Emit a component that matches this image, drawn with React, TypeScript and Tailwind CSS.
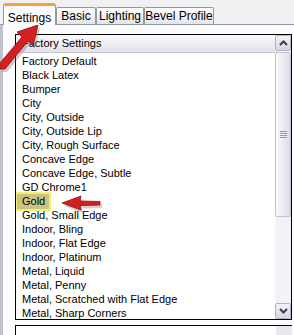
import React from 'react';

const presets = [
  'Factory Default',
  'Black Latex',
  'Bumper',
  'City',
  'City, Outside',
  'City, Outside Lip',
  'City, Rough Surface',
  'Concave Edge',
  'Concave Edge, Subtle',
  'GD Chrome1',
  'Gold',
  'Gold, Small Edge',
  'Indoor, Bling',
  'Indoor, Flat Edge',
  'Indoor, Platinum',
  'Metal, Liquid',
  'Metal, Penny',
  'Metal, Scratched with Flat Edge',
  'Metal, Sharp Corners'
];

const tabs = [
  { label: 'Basic', w: 'w-[40px]' },
  { label: 'Lighting', w: 'w-[48px]' },
  { label: 'Bevel Profile', w: 'w-[70px]' }
];

function Chevron({ up }: { up?: boolean }) {
  return (
    <svg width="9" height="6" viewBox="0 0 9 6">
      <path d={up ? 'M1 5 L4.5 1.5 L8 5' : 'M1 1 L4.5 4.5 L8 1'} fill="none" stroke="#3c3c58" strokeWidth="2" />
    </svg>
  );
}

// red annotation arrows drawn over the dialog
const arrowUp = 'M0 63 L22 37 L17 32 L38 25 L33 46 L28 41 L5 69 L0 69 Z';
const arrowLeft = 'M62 203 L81 196 L80 201 L100 201.5 L100 205 L80 205.5 L81 210 Z';

function Arrows() {
  return (
    <svg className="pointer-events-none absolute left-0 top-0" width="294" height="335">
      <g fill="#777" opacity="0.35" transform="translate(2 3)">
        <path d={arrowUp} />
        <path d={arrowLeft} />
      </g>
      <path d={arrowUp} fill="#d42020" stroke="#8a1010" strokeWidth="0.8" />
      <path d={arrowLeft} fill="#d42020" stroke="#8a1010" strokeWidth="0.8" />
    </svg>
  );
}

export default function App() {
  return (
    <div className="relative h-[335px] w-[294px] overflow-hidden bg-[#f1f1f3] font-['Liberation_Sans',Arial,sans-serif] text-[11px] text-black">
      <div className="flex h-[25px] items-end border-b border-[#919b9c] pl-[3px]">
        <div className="relative z-10 -mb-px flex h-[22px] w-[53px] items-start justify-center rounded-t-[3px] border-x border-t-[3px] border-[#919b9c] border-t-[#f0a43c] bg-[#fcfcfe] pt-[3px] text-[12px]">
          Settings
        </div>
        {tabs.map((t) => (
          <div
            key={t.label}
            className={`flex h-[17px] ${t.w} items-center justify-center rounded-t-[2px] border-x border-t border-[#919b9c] bg-gradient-to-b from-[#ffffff] to-[#e4e4ec] text-[12px]`}
          >
            {t.label}
          </div>
        ))}
      </div>

      <div className="flex h-[310px] flex-col border-l-[3px] border-[#c2c2cc] bg-[#fcfcfe] pl-[12px] pr-[2px] pt-[9px]">
        <div className="flex h-[286px] border border-black bg-white">
          <div className="flex-1 overflow-hidden">
            <div className="flex h-[18px] items-center border-b border-[#c4c4cc] bg-gradient-to-b from-[#fafafc] to-[#e2e2ea] pl-[6px]">
              Factory Settings
            </div>
            <div className="pt-[1px]">
              {presets.map((p) => (
                <div key={p} className="relative flex h-[14px] items-center pl-[6px]">
                  {p === 'Gold' && (
                    <span className="absolute left-[-1px] top-[-2px] h-[19px] w-[36px] border-2 border-[#f3ee74] bg-[#c9c483]" />
                  )}
                  <span className="relative">{p}</span>
                </div>
              ))}
            </div>
          </div>
          <div className="flex w-[16px] flex-col bg-[#f3f3f7]">
            <div className="flex h-[16px] items-center justify-center rounded-[2px] border border-[#b4b4c4] bg-gradient-to-b from-[#f4f4f8] to-[#d6d6e2]">
              <Chevron up />
            </div>
            <div className="mt-[1px] flex h-[165px] items-center justify-center rounded-[2px] border border-[#c2c2d0] bg-gradient-to-r from-[#fbfbfd] to-[#dcdce6]">
              <div className="flex flex-col gap-[1px]">
                <span className="block h-px w-[7px] bg-[#9a9aae]" />
                <span className="block h-px w-[7px] bg-[#9a9aae]" />
                <span className="block h-px w-[7px] bg-[#9a9aae]" />
                <span className="block h-px w-[7px] bg-[#9a9aae]" />
              </div>
            </div>
            <div className="flex-1" />
            <div className="flex h-[16px] items-center justify-center rounded-[2px] border border-[#b4b4c4] bg-gradient-to-b from-[#f4f4f8] to-[#d6d6e2]">
              <Chevron />
            </div>
          </div>
        </div>
        <div className="mt-[5px] flex h-[20px] border-l border-t border-black bg-white">
          <div className="flex-1" />
          <div className="w-[16px] bg-[#e8e8ee]" />
        </div>
      </div>

      <Arrows />
    </div>
  );
}
